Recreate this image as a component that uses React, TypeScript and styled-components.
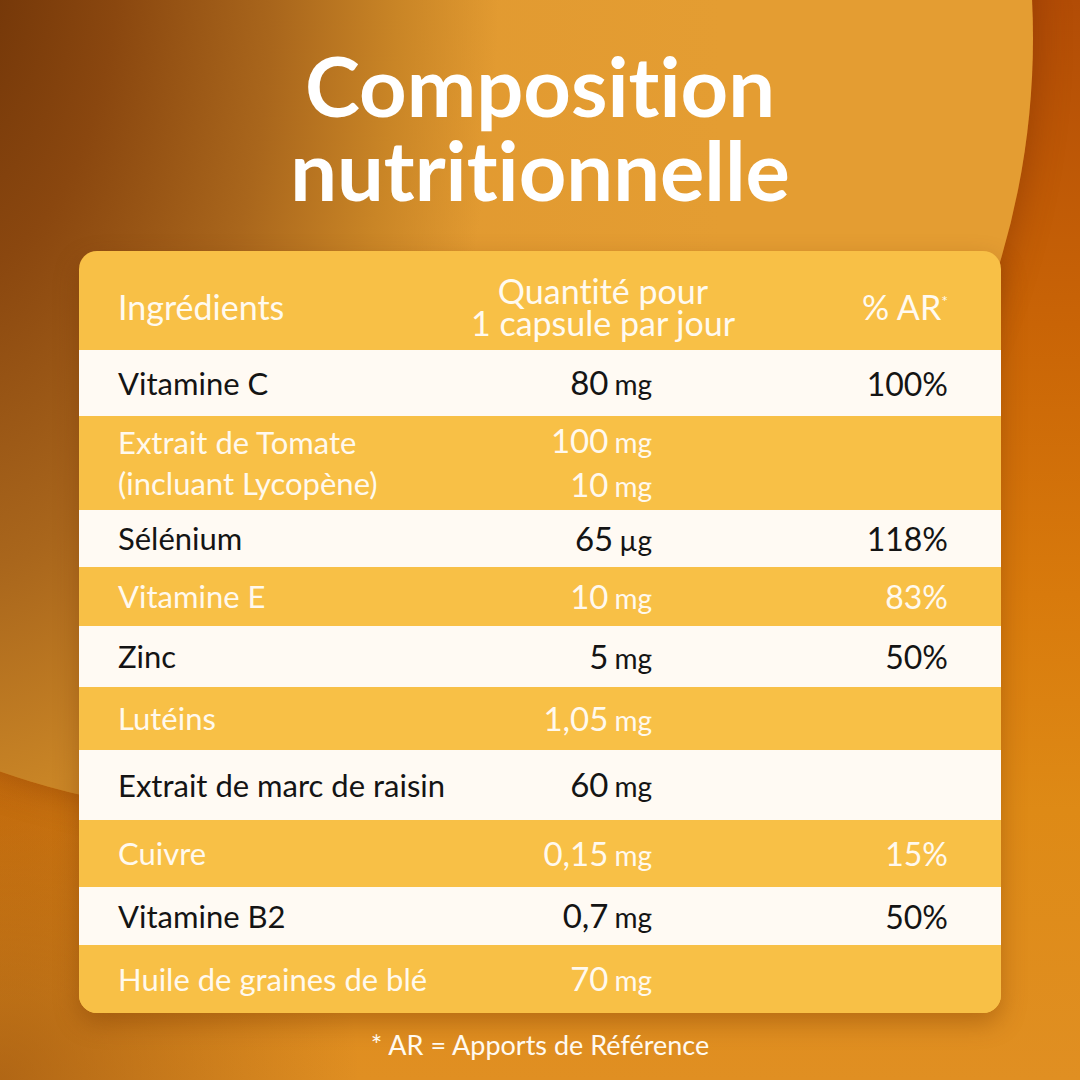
import React from 'react';
import styled, { createGlobalStyle } from 'styled-components';

const GlobalStyle = createGlobalStyle`
  html, body {
    margin: 0;
    padding: 0;
  }
  body {
    font-family: Lato, "Open Sans", sans-serif;
    font-variant-ligatures: none;
  }
`;

const Page = styled.div`
  position: relative;
  width: 1080px;
  height: 1080px;
  overflow: hidden;
  background:
    radial-gradient(circle 360px at 0 100%, rgba(130, 62, 8, 0.5), rgba(130, 62, 8, 0) 100%),
    radial-gradient(ellipse 260px 200px at 0 800px, rgba(170, 70, 0, 0.35), rgba(170, 70, 0, 0) 100%),
    linear-gradient(180deg, #b24c06 0%, #c96406 30%, #d87a0c 55%, #de8a16 75%, #e08f22 100%);
`;

// big lighter disc behind the title
const Disc = styled.div`
  position: absolute;
  left: -521px;
  top: -739px;
  width: 1554px;
  height: 1554px;
  border-radius: 50%;
  background:
    radial-gradient(ellipse 560px 1060px at 461px 679px,
      #6a3006 0%, #8a470f 32%, #a9661c 60%, #c98526 82%, rgba(222, 150, 44, 0) 100%),
    linear-gradient(90deg, #d08a28 30%, #e09830 50%, #e49d32 80%);
  box-shadow: 0 0 36px rgba(110, 40, 0, 0.45);
`;

const Content = styled.div`
  position: relative;
  display: flex;
  flex-direction: column;
  align-items: center;
  padding-top: 43px;
`;

const Title = styled.h1`
  margin: 0;
  font-family: Lato, sans-serif;
  font-weight: 700;
  font-size: 83px;
  line-height: 84px;
  color: #ffffff;
  text-align: center;
`;

const Card = styled.div`
  margin-top: 40px;
  width: 922px;
  border-radius: 18px;
  overflow: hidden;
  background: #f8c046;
  box-shadow: 0 10px 24px rgba(110, 50, 0, 0.35);
`;

const HeaderRow = styled.div`
  display: grid;
  grid-template-columns: 345px 280px 1fr;
  align-items: center;
  height: 99px;
  padding: 12px 53px 0 39px;
  box-sizing: border-box;
  color: #fffaf0;
  font-size: 34px;
`;

const HeadCell = styled.div<{ $align: 'left' | 'center' | 'right' }>`
  text-align: ${(p) => p.$align};
  line-height: 32px;
  white-space: nowrap;
`;

const Star = styled.sup`
  font-size: 16px;
  vertical-align: top;
  position: relative;
  top: -6px;
`;

const Row = styled.div<{ $light: boolean }>`
  display: grid;
  grid-template-columns: 374px 160px 1fr;
  align-items: center;
  padding: 0 53px 0 39px;
  background: ${(p) => (p.$light ? '#fffaf3' : '#f8c046')};
  color: ${(p) => (p.$light ? '#141414' : '#fff9ee')};
  font-size: 31px;
`;

const Name = styled.div`
  line-height: 41px;
  white-space: nowrap;
`;

const Qty = styled.div`
  text-align: right;
  line-height: 42px;
  white-space: nowrap;
  font-size: 33px;
`;

const Unit = styled.span`
  font-size: 28px;
  margin-left: 6px;
`;

const Pct = styled.div`
  text-align: right;
  font-size: 32px;
`;

const Footer = styled.div`
  margin-top: 15px;
  color: #fffaf0;
  font-size: 27px;
`;

type Item = {
  name: string[];
  qty: [string, string][];
  pct: string;
  h: number;
};

const items: Item[] = [
  { name: ['Vitamine C'], qty: [['80', 'mg']], pct: '100%', h: 66 },
  { name: ['Extrait de Tomate', '(incluant Lycopène)'], qty: [['100', 'mg'], ['10', 'mg']], pct: '', h: 94 },
  { name: ['Sélénium'], qty: [['65', 'µg']], pct: '118%', h: 57 },
  { name: ['Vitamine E'], qty: [['10', 'mg']], pct: '83%', h: 59 },
  { name: ['Zinc'], qty: [['5', 'mg']], pct: '50%', h: 61 },
  { name: ['Lutéins'], qty: [['1,05', 'mg']], pct: '', h: 63 },
  { name: ['Extrait de marc de raisin'], qty: [['60', 'mg']], pct: '', h: 70 },
  { name: ['Cuivre'], qty: [['0,15', 'mg']], pct: '15%', h: 67 },
  { name: ['Vitamine B2'], qty: [['0,7', 'mg']], pct: '50%', h: 58 },
  { name: ['Huile de graines de blé'], qty: [['70', 'mg']], pct: '', h: 68 },
];

export default function App() {
  return (
    <>
      <GlobalStyle />
      <Page>
        <Disc />
        <Content>
          <Title>
            Composition
            <br />
            nutritionnelle
          </Title>
          <Card>
            <HeaderRow>
              <HeadCell $align="left">Ingrédients</HeadCell>
              <HeadCell $align="center">
                Quantité pour
                <br />1 capsule par jour
              </HeadCell>
              <HeadCell $align="right">
                % AR<Star>*</Star>
              </HeadCell>
            </HeaderRow>
            {items.map((it, i) => (
              <Row key={it.name[0]} $light={i % 2 === 0} style={{ height: it.h }}>
                <Name>
                  {it.name.map((n) => (
                    <div key={n}>{n}</div>
                  ))}
                </Name>
                <Qty>
                  {it.qty.map(([v, u]) => (
                    <div key={v}>
                      {v}
                      <Unit>{u}</Unit>
                    </div>
                  ))}
                </Qty>
                <Pct>{it.pct}</Pct>
              </Row>
            ))}
          </Card>
          <Footer>* AR = Apports de Référence</Footer>
        </Content>
      </Page>
    </>
  );
}
